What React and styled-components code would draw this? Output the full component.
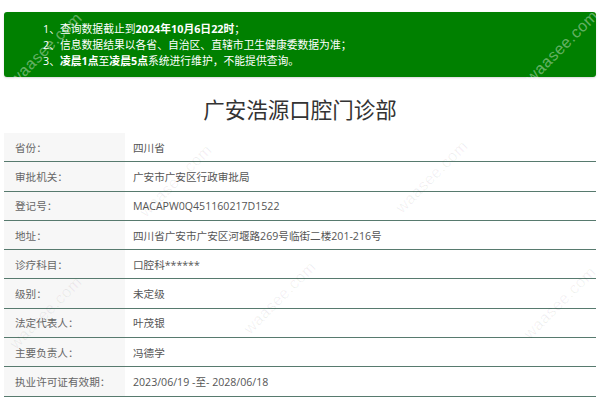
import React from 'react'
import styled, { createGlobalStyle } from 'styled-components'

const GlobalStyle = createGlobalStyle`
  html, body {
    margin: 0;
    padding: 0;
    background: #fff;
  }
  body {
    font-family: "Open Sans", "Noto Sans CJK SC", sans-serif;
  }
`

const rows = [
  ['省份：', '四川省'],
  ['审批机关：', '广安市广安区行政审批局'],
  ['登记号：', 'MACAPW0Q451160217D1522'],
  ['地址：', '四川省广安市广安区河堰路269号临街二楼201-216号'],
  ['诊疗科目：', '口腔科******'],
  ['级别：', '未定级'],
  ['法定代表人：', '叶茂银'],
  ['主要负责人：', '冯德学'],
  ['执业许可证有效期：', '2023/06/19 -至- 2028/06/18'],
]

// watermark spots (bottom-left corner of each rotated text)
const marks = [
  { x: 6, y: 76, light: true },
  { x: 522, y: 74, light: true },
  { x: 136, y: 208 },
  { x: 392, y: 204 },
  { x: 6, y: 340 },
  { x: 240, y: 325 },
  { x: 520, y: 330 },
]

function App() {
  return (
    <Page>
      <GlobalStyle />
      <Notice>
        <NoticeLine>1、查询数据截止到<b>2024年10月6日22时</b>；</NoticeLine>
        <NoticeLine>2、信息数据结果以各省、自治区、直辖市卫生健康委数据为准；</NoticeLine>
        <NoticeLine>3、<b>凌晨1点</b>至<b>凌晨5点</b>系统进行维护，不能提供查询。</NoticeLine>
      </Notice>
      <Title>广安浩源口腔门诊部</Title>
      <Table>
        {rows.map(([label, value]) => (
          <Row key={label}>
            <Label>{label}</Label>
            <Value>{value}</Value>
          </Row>
        ))}
      </Table>
      {marks.map((m, i) => (
        <Watermark key={i} light={m.light} style={{ left: m.x, top: m.y }}>
          waasee.com
        </Watermark>
      ))}
    </Page>
  )
}

export default App

const Page = styled.div`
  position: relative;
  width: 600px;
  height: 414px;
  padding: 12px 4px 0;
  box-sizing: border-box;
  overflow: hidden;
`

const Notice = styled.div`
  background: #008000;
  border-radius: 3px;
  height: 65px;
  box-sizing: border-box;
  padding: 9px 0 0 39px;
  box-shadow: 0 1px 2px rgba(0, 0, 0, 0.15);
`

const NoticeLine = styled.div`
  color: #fff;
  font-size: 10.8px;
  line-height: 16px;
  white-space: nowrap;

  b {
    font-weight: 700;
  }
`

const Title = styled.h1`
  margin: 0;
  height: 56px;
  line-height: 66px;
  text-align: center;
  font-size: 21.5px;
  font-weight: 400;
  color: #333;
`

const Table = styled.div`
  display: flex;
  flex-direction: column;
`

const Row = styled.div`
  display: grid;
  grid-template-columns: 121px 1fr;
  height: 29.3px;
  box-sizing: border-box;
  border-bottom: 1px solid #577a6e;
  font-size: 10.6px;
  color: #555;
`

const Label = styled.div`
  display: flex;
  align-items: center;
  padding-left: 11px;
  background: #f7f7f7;
  color: #666;
`

const Value = styled.div`
  display: flex;
  align-items: center;
  padding-left: 8px;
  white-space: nowrap;
`

const Watermark = styled.span`
  position: absolute;
  transform: rotate(-45deg);
  transform-origin: left top;
  font-family: "Liberation Sans", sans-serif;
  font-size: 16px;
  letter-spacing: 0.5px;
  color: ${props => (props.light ? 'rgba(255, 255, 255, 0.4)' : 'rgba(0, 0, 0, 0.06)')};
  pointer-events: none;
  white-space: nowrap;
`
